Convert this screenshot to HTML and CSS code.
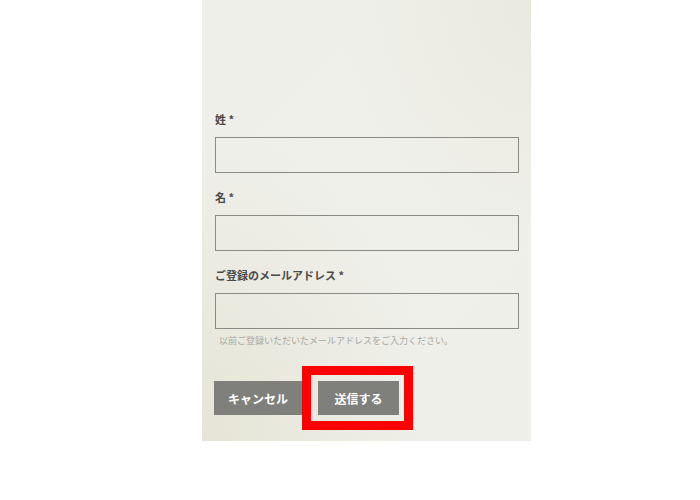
FILE: index.html
```html
<!DOCTYPE html>
<html lang="ja">
<head>
<meta charset="utf-8">
<link rel="stylesheet" href="styles.css">
</head>
<body>
<div class="panel">
  <form class="form">
    <div class="field">
      <label class="label">姓 *</label>
      <input class="input" type="text">
    </div>
    <div class="field">
      <label class="label">名 *</label>
      <input class="input" type="text">
    </div>
    <div class="field">
      <label class="label">ご登録のメールアドレス *</label>
      <input class="input" type="text">
      <p class="hint">以前ご登録いただいたメールアドレスをご入力ください。</p>
    </div>
    <div class="actions">
      <button type="button" class="btn">キャンセル</button>
      <div class="highlight">
        <button type="submit" class="btn">送信する</button>
      </div>
    </div>
  </form>
</div>
</body>
</html>
```
FILE: styles.css
```css
html, body {
  margin: 0;
  padding: 0;
  background: #ffffff;
}
body {
  font-family: "Noto Sans CJK JP", "Noto Sans", sans-serif;
}
.panel {
  margin-left: 202px;
  width: 329px;
  height: 441px;
  box-sizing: border-box;
  padding: 111px 12px 0 13px;
  background:
    radial-gradient(ellipse at 100% 0%, rgba(225, 224, 205, 0.4), rgba(225, 224, 205, 0) 40%),
    radial-gradient(ellipse at 0% 100%, rgba(222, 221, 200, 0.6), rgba(222, 221, 200, 0) 50%),
    linear-gradient(135deg, #efefea 0%, #f0f0eb 50%, #efefea 100%);
}
.form {
  display: flex;
  flex-direction: column;
}
.field {
  display: flex;
  flex-direction: column;
  margin-bottom: 16px;
}
.label {
  font-size: 11px;
  line-height: 16px;
  font-weight: bold;
  color: #4a4a4a;
  margin-bottom: 10px;
}
.input {
  width: 304px;
  height: 36px;
  box-sizing: border-box;
  border: 1px solid #8a8a86;
  background: transparent;
  margin: 0;
  padding: 0 8px;
}
.hint {
  margin: 5px 0 0 4px;
  font-size: 9px;
  line-height: 14px;
  color: #a8a8a4;
}
.field:last-of-type {
  margin-bottom: 0;
}
.actions {
  display: flex;
  align-items: center;
  margin-top: 2px;
  margin-left: -1px;
}
.btn {
  height: 34px;
  border: none;
  background: #7f807b;
  color: #ffffff;
  font-family: "Noto Sans CJK JP", "Noto Sans", sans-serif;
  font-size: 12px;
  font-weight: bold;
  padding: 0;
  margin: 0;
}
.actions > .btn {
  width: 88px;
}
.highlight {
  border: 9px solid #ff0000;
  padding: 6px 5px 6px 7px;
  display: flex;
}
.highlight .btn {
  width: 81px;
}
```
